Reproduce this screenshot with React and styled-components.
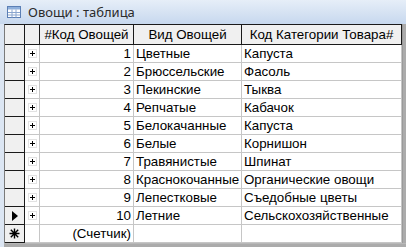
import React from "react";
import styled, { createGlobalStyle } from "styled-components";

const Global = createGlobalStyle`
  html, body { margin: 0; padding: 0; }
  body { width: 406px; height: 247px; overflow: hidden; background: #ababab; }
  #root { width: 406px; height: 247px; }
`;

const Window = styled.div`
  width: 406px;
  height: 247px;
  display: flex;
  flex-direction: column;
  background: #dce6f3;
  font-family: "Liberation Sans", Arial, sans-serif;
  overflow: hidden;
`;

const TitleBar = styled.div`
  height: 24px;
  flex: none;
  display: flex;
  align-items: center;
  gap: 7px;
  padding-left: 7px;
  background: linear-gradient(#e6eef8, #c7d8ee);
  color: #2b2b2b;
  font-family: "Noto Sans", "Open Sans", sans-serif;
  font-size: 13px;
`;

const Body = styled.div`
  flex: 1;
  display: flex;
  flex-direction: column;
  padding-left: 4px;
  min-height: 0;
`;

const GridWrap = styled.div`
  display: flex;
  background: #ababab;
`;

const Grid = styled.div`
  display: grid;
  grid-template-columns: 20px 15px 94px 108px 160px;
  grid-auto-rows: 18px;
  grid-template-rows: 20px;
  border-left: 1px solid #7a7a7a;
  border-top: 1px solid #1a1a1a;
  background: #fff;
  font-size: 13.33px;
  color: #000;
`;

const Filler = styled.div`
  flex: 1;
  border-left: 1px solid #9a9a9a;
  background: #ababab;
`;

const Bottom = styled.div`
  flex: 1;
  background: #ababab;
  border-top: 1px solid #b8b8b8;
`;

const Header = styled.div`
  box-sizing: border-box;
  background: #f0f0f0;
  border-right: 1px solid #1a1a1a;
  border-bottom: 1px solid #1a1a1a;
  display: flex;
  align-items: center;
  justify-content: center;
  white-space: nowrap;
  overflow: hidden;
  line-height: 1;
`;

const Selector = styled.div`
  box-sizing: border-box;
  background: #f0f0f0;
  border-right: 1px solid #1a1a1a;
  border-bottom: 1px solid #1a1a1a;
  display: flex;
  align-items: center;
  justify-content: center;
`;

const Expander = styled.div`
  box-sizing: border-box;
  border-right: 1px solid #c6c6c6;
  border-bottom: 1px solid #c6c6c6;
  display: flex;
  align-items: center;
  justify-content: center;
`;

const PlusBox = styled.div`
  width: 9px;
  height: 9px;
  box-sizing: border-box;
  border: 1px solid #e2e2e2;
  position: relative;
  &::before, &::after {
    content: "";
    position: absolute;
    background: #000;
  }
  &::before { left: 1px; top: 3px; width: 5px; height: 1px; }
  &::after { left: 3px; top: 1px; width: 1px; height: 5px; }
`;

const Cell = styled.div`
  box-sizing: border-box;
  border-right: 1px solid #c6c6c6;
  border-bottom: 1px solid #c6c6c6;
  display: flex;
  align-items: center;
  justify-content: ${(p) => (p.$right ? "flex-end" : "flex-start")};
  padding: ${(p) => (p.$right ? "0 2px 0 0" : "0 0 0 2px")};
  white-space: nowrap;
  overflow: hidden;
  line-height: 1;
`;

const Arrow = styled.div`
  width: 0;
  height: 0;
  border-top: 5px solid transparent;
  border-bottom: 5px solid transparent;
  border-left: 6px solid #000;
  margin-left: 1px;
`;

const TableIcon = () => (
  <svg width="14" height="12" viewBox="0 0 14 12">
    <rect x="0.5" y="0.5" width="13" height="11" fill="#fff" stroke="#5b7fb5" />
    <rect x="1" y="1" width="12" height="2.5" fill="#8fb0dc" />
    <path d="M1 6.5h12M1 9h12M5 3.5v8M9 3.5v8" stroke="#8aa6cf" strokeWidth="1" />
  </svg>
);

const Star = () => (
  <svg width="11" height="11" viewBox="0 0 11 11">
    <path d="M5.5 0.5v10M0.5 5.5h10M1.8 1.8l7.4 7.4M9.2 1.8l-7.4 7.4" stroke="#000" strokeWidth="1.4" />
  </svg>
);

const rows = [
  [1, "Цветные", "Капуста"],
  [2, "Брюссельские", "Фасоль"],
  [3, "Пекинские", "Тыква"],
  [4, "Репчатые", "Кабачок"],
  [5, "Белокачанные", "Капуста"],
  [6, "Белые", "Корнишон"],
  [7, "Травянистые", "Шпинат"],
  [8, "Краснокочанные", "Органические овощи"],
  [9, "Лепестковые", "Съедобные цветы"],
  [10, "Летние", "Сельскохозяйственные"],
];

export default function App() {
  return (
    <Window>
      <Global />
      <TitleBar>
        <TableIcon />
        <span>Овощи : таблица</span>
      </TitleBar>
      <Body>
        <GridWrap>
          <Grid>
            <Header />
            <Header />
            <Header>#Код Овощей</Header>
            <Header>Вид Овощей</Header>
            <Header>Код Категории Товара#</Header>
            {rows.map(([id, kind, cat]) => (
              <React.Fragment key={id}>
                <Selector>{id === 10 ? <Arrow /> : null}</Selector>
                <Expander>
                  <PlusBox />
                </Expander>
                <Cell $right>{id}</Cell>
                <Cell>{kind}</Cell>
                <Cell>{cat}</Cell>
              </React.Fragment>
            ))}
            <Selector>
              <Star />
            </Selector>
            <Expander />
            <Cell $right>(Счетчик)</Cell>
            <Cell />
            <Cell />
          </Grid>
          <Filler />
        </GridWrap>
        <Bottom />
      </Body>
    </Window>
  );
}
